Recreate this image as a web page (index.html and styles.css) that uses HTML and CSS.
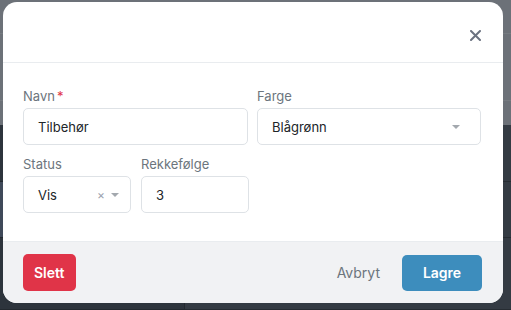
FILE: index.html
```html
<!DOCTYPE html>
<html lang="no">
<head>
  <meta charset="UTF-8" />
  <meta name="viewport" content="width=device-width, initial-scale=1" />
  <title>Rediger kategori</title>
  <link rel="stylesheet" href="styles.css">
</head>
<body>

<!-- Siden bak modalen -->
<div class="backdrop">
  <div class="bg-bar bg-bar-a"></div>
  <div class="bg-bar bg-bar-b"></div>
  <div class="bg-bar bg-bar-c"></div>
  <div class="bg-rows">
    <div class="bg-side"></div><div class="bg-main"></div>
    <div class="bg-side bg-side-active"></div><div class="bg-main"></div>
    <div class="bg-side"></div><div class="bg-main"></div>
  </div>
</div>

<!-- Modal -->
<div class="modal">
  <div class="modal-header">
    <button class="modal-close" type="button" aria-label="Lukk">
      <svg width="11" height="11" viewBox="0 0 11 11">
        <path d="M1 1L10 10M10 1L1 10" stroke="currentColor" stroke-width="2" stroke-linecap="round" />
      </svg>
    </button>
  </div>

  <div class="modal-body">
    <div class="form-row">
      <div class="field">
        <label class="field-label">Navn<span class="required">*</span></label>
        <div class="input">Tilbehør</div>
      </div>
      <div class="field">
        <label class="field-label">Farge</label>
        <div class="input select">
          <span>Blågrønn</span>
          <span class="caret"></span>
        </div>
      </div>
    </div>

    <div class="form-row">
      <div class="form-row form-row-split">
        <div class="field">
          <label class="field-label">Status</label>
          <div class="input select select-small">
            <span>Vis</span>
            <span class="select-actions">
              <span class="clear">×</span>
              <span class="caret"></span>
            </span>
          </div>
        </div>
        <div class="field">
          <label class="field-label">Rekkefølge</label>
          <div class="input">3</div>
        </div>
      </div>
      <div></div>
    </div>
  </div>

  <div class="modal-footer">
    <button class="btn btn-danger" type="button">Slett</button>
    <div class="footer-right">
      <button class="btn btn-link" type="button">Avbryt</button>
      <button class="btn btn-primary" type="button">Lagre</button>
    </div>
  </div>
</div>

</body>
</html>
```

FILE: styles.css
```css
* {
  box-sizing: border-box;
}
body, html {
  margin: 0; padding: 0; height: 100%;
  font-family: Inter, "Noto Sans", sans-serif;
  background: #2e353d;
  overflow: hidden;
}

/* bakgrunn */
.backdrop {
  height: 100%;
  display: flex;
  flex-direction: column;
}
.bg-bar {
  background: #6c7178;
  border-bottom: 1px solid #767b81;
}
.bg-bar-a { height: 34px; }
.bg-bar-b { height: 67px; }
.bg-bar-c { height: 24px; border-bottom: none; }

.bg-rows {
  flex: 1;
  display: grid;
  grid-template-columns: 185px 1fr;
  grid-template-rows: 57px 56px 1fr;
}
.bg-side {
  background: #2d343c;
  border-bottom: 1px solid #23292f;
  border-right: 1px solid #23292f;
}
.bg-side-active {
  background: #3f4959;
}
.bg-main {
  background: #343b43;
  border-bottom: 1px solid #262c32;
}

/* modal */
.modal {
  position: absolute;
  left: 3px;
  top: 2px;
  width: 500px;
  height: 301px;
  background: white;
  border-radius: 14px;
  overflow: hidden;
  display: flex;
  flex-direction: column;
}

.modal-header {
  height: 61px;
  border-bottom: 1px solid #e9ecef;
  display: flex;
  justify-content: flex-end;
  align-items: center;
  padding: 6px 22px 0 0;
}
.modal-close {
  background: none;
  border: none;
  padding: 0;
  color: #6b7280;
  display: flex;
  cursor: pointer;
}

.modal-body {
  flex: 1;
  padding: 24px 20px 0;
  display: flex;
  flex-direction: column;
  gap: 10px;
}

.form-row {
  display: grid;
  grid-template-columns: 225px 224px;
  gap: 9px;
}
.form-row-split {
  grid-template-columns: 108px 108px;
  gap: 10px;
}

.field-label {
  display: block;
  font-size: 13px;
  line-height: 18px;
  color: #6c757d;
  margin-bottom: 3px;
}
.required {
  color: #e03448;
  margin-left: 2px;
}

.input {
  height: 37px;
  border: 1px solid #dee2e6;
  border-radius: 5px;
  padding: 0 14px;
  font-size: 13px;
  color: #212529;
  display: flex;
  align-items: center;
}

.select {
  justify-content: space-between;
  padding-right: 20px;
}
.select-small {
  padding-right: 11px;
}
.select-actions {
  display: flex;
  align-items: center;
  gap: 6px;
}
.clear {
  color: #9ca3af;
  font-size: 12px;
}
.caret {
  width: 0;
  height: 0;
  border-left: 4px solid transparent;
  border-right: 4px solid transparent;
  border-top: 4px solid #a3a8ae;
}

.modal-footer {
  height: 62px;
  border-top: 1px solid #e9ecef;
  background: #f1f2f4;
  padding: 0 21px 0 20px;
  display: flex;
  align-items: center;
  justify-content: space-between;
}
.footer-right {
  display: flex;
  align-items: center;
  gap: 10px;
}

.btn {
  font-family: inherit;
  font-size: 14px;
  border: none;
  border-radius: 5px;
  height: 37px;
  padding: 0 11px;
  cursor: pointer;
}
.btn-danger {
  background: #e03448;
  color: white;
  font-weight: 600;
}
.btn-primary {
  background: #3d8dbd;
  color: white;
  font-weight: 600;
  width: 80px;
  height: 36px;
}
.btn-link {
  background: none;
  color: #6c757d;
  padding: 0 12px;
}
```
